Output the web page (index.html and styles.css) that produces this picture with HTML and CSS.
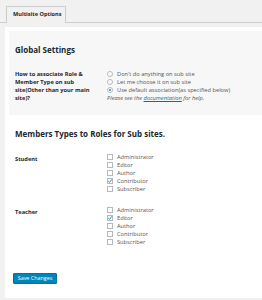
FILE: index.html
```html
<!DOCTYPE html>
<html lang="en">
<head>
    <meta charset="UTF-8">
    <meta name="viewport" content="width=device-width, initial-scale=1.0">
    <title>Multisite Options</title>
    <link rel="stylesheet" href="styles.css">
</head>
<body>
    <div class="wrap">
        <h2 class="nav-tab-wrapper">
            <a class="nav-tab nav-tab-active" href="#">Multisite Options</a>
        </h2>

        <div class="panel">
            <!-- الاعدادات العامة -->
            <div class="section section-global">
                <h3 class="section-title">Global Settings</h3>
                <div class="form-row">
                    <div class="row-label">How to associate Role &amp; Member Type on sub site(Other than your main site)?</div>
                    <div class="row-field">
                        <label class="choice"><span class="radio"></span>Don't do anything on sub site</label>
                        <label class="choice"><span class="radio"></span>Let me choose it on sub site</label>
                        <label class="choice"><span class="radio checked"></span>Use default association(as specified below)</label>
                        <p class="description">Please see the <a href="#">documentation</a> for help.</p>
                    </div>
                </div>
            </div>

            <!-- انواع الاعضاء -->
            <div class="section section-roles">
                <h3 class="section-title">Members Types to Roles for Sub sites.</h3>
                <div class="form-row">
                    <div class="row-label role-label">Student</div>
                    <div class="row-field">
                        <label class="choice"><span class="checkbox"></span>Administrator</label>
                        <label class="choice"><span class="checkbox"></span>Editor</label>
                        <label class="choice"><span class="checkbox"></span>Author</label>
                        <label class="choice"><span class="checkbox checked"><svg viewBox="0 0 6 6"><path d="M1.2 3.1 L2.5 4.4 L4.8 1.3"/></svg></span>Contributor</label>
                        <label class="choice"><span class="checkbox"></span>Subscriber</label>
                    </div>
                </div>
                <div class="form-row">
                    <div class="row-label role-label">Teacher</div>
                    <div class="row-field">
                        <label class="choice"><span class="checkbox"></span>Administrator</label>
                        <label class="choice"><span class="checkbox checked"><svg viewBox="0 0 6 6"><path d="M1.2 3.1 L2.5 4.4 L4.8 1.3"/></svg></span>Editor</label>
                        <label class="choice"><span class="checkbox"></span>Author</label>
                        <label class="choice"><span class="checkbox"></span>Contributor</label>
                        <label class="choice"><span class="checkbox"></span>Subscriber</label>
                    </div>
                </div>
            </div>

            <button class="button-primary">Save Changes</button>
        </div>
    </div>
</body>
</html>
```

FILE: styles.css
```css
/* الصفحة */
body {
    margin: 0;
    background: #f1f1f1;
    font-family: 'Open Sans', sans-serif;
    color: #444;
    height: 300px;
    overflow: hidden;
}

.wrap {
    display: flex;
    flex-direction: column;
    height: 300px;
}

/* التبويبات */
.nav-tab-wrapper {
    margin: 0;
    padding: 6px 0 0 6px;
    border-bottom: 1px solid #ccc;
    display: flex;
    height: 16px;
}

.nav-tab {
    display: block;
    box-sizing: border-box;
    width: 60px;
    height: 17px;
    padding: 0 0 0 6px;
    border: 1px solid #ccc;
    border-bottom: none;
    background: #f1f1f1;
    color: #23282d;
    font-size: 5.6px;
    font-weight: bold;
    line-height: 15px;
    text-decoration: none;
}

/* اللوحة البيضاء */
.panel {
    flex: 1;
    margin: 4px 0 2px 5px;
    background: #fff;
    display: flex;
    flex-direction: column;
    align-items: flex-start;
}

.section {
    align-self: stretch;
}

.section-global {
    margin: 4px 0 0 4px;
    padding: 14px 0 13px 6px;
    background: #f7f7f7;
}

.section-roles {
    padding: 14px 0 0 10px;
}

.section-title {
    margin: 0;
    font-size: 8px;
    line-height: 10px;
    font-weight: bold;
    color: #23282d;
}

.form-row {
    display: grid;
    grid-template-columns: 92px 1fr;
    margin-top: 15px;
}

.section-roles .form-row {
    margin-top: 14px;
}

.section-roles .form-row + .form-row {
    margin-top: 13px;
}

.row-label {
    font-size: 5.7px;
    font-weight: bold;
    line-height: 8px;
    color: #23282d;
    padding-right: 12px;
}

.role-label {
    padding-top: 2px;
}

.row-field {
    display: flex;
    flex-direction: column;
}

.choice {
    display: flex;
    align-items: center;
    gap: 4px;
    font-size: 5.7px;
    line-height: 8px;
    color: #555;
}

/* الراديو و الصناديق */
.radio,
.checkbox {
    box-sizing: border-box;
    width: 6px;
    height: 6px;
    border: 1px solid #b4b9be;
    background: #fff;
    position: relative;
    flex: none;
}

.radio {
    border-radius: 50%;
}

.radio.checked::after {
    content: "";
    position: absolute;
    left: 1px;
    top: 1px;
    width: 2px;
    height: 2px;
    border-radius: 50%;
    background: #1e8cbe;
}

.checkbox svg {
    position: absolute;
    left: -1px;
    top: -1px;
    width: 6px;
    height: 6px;
}

.checkbox svg path {
    fill: none;
    stroke: #1e8cbe;
    stroke-width: 0.9;
}

.description {
    margin: 0;
    font-size: 5.7px;
    line-height: 8px;
    font-style: italic;
    color: #555;
}

.description a {
    color: #0073aa;
}

/* زر الحفظ */
.button-primary {
    margin: auto 0 14px 8px;
    width: 44px;
    height: 11px;
    padding: 0;
    background: #0085ba;
    border: 1px solid #0073aa;
    border-radius: 1px;
    color: #fff;
    font-family: 'Open Sans', sans-serif;
    font-size: 5.4px;
    line-height: 9px;
    cursor: pointer;
}
```
